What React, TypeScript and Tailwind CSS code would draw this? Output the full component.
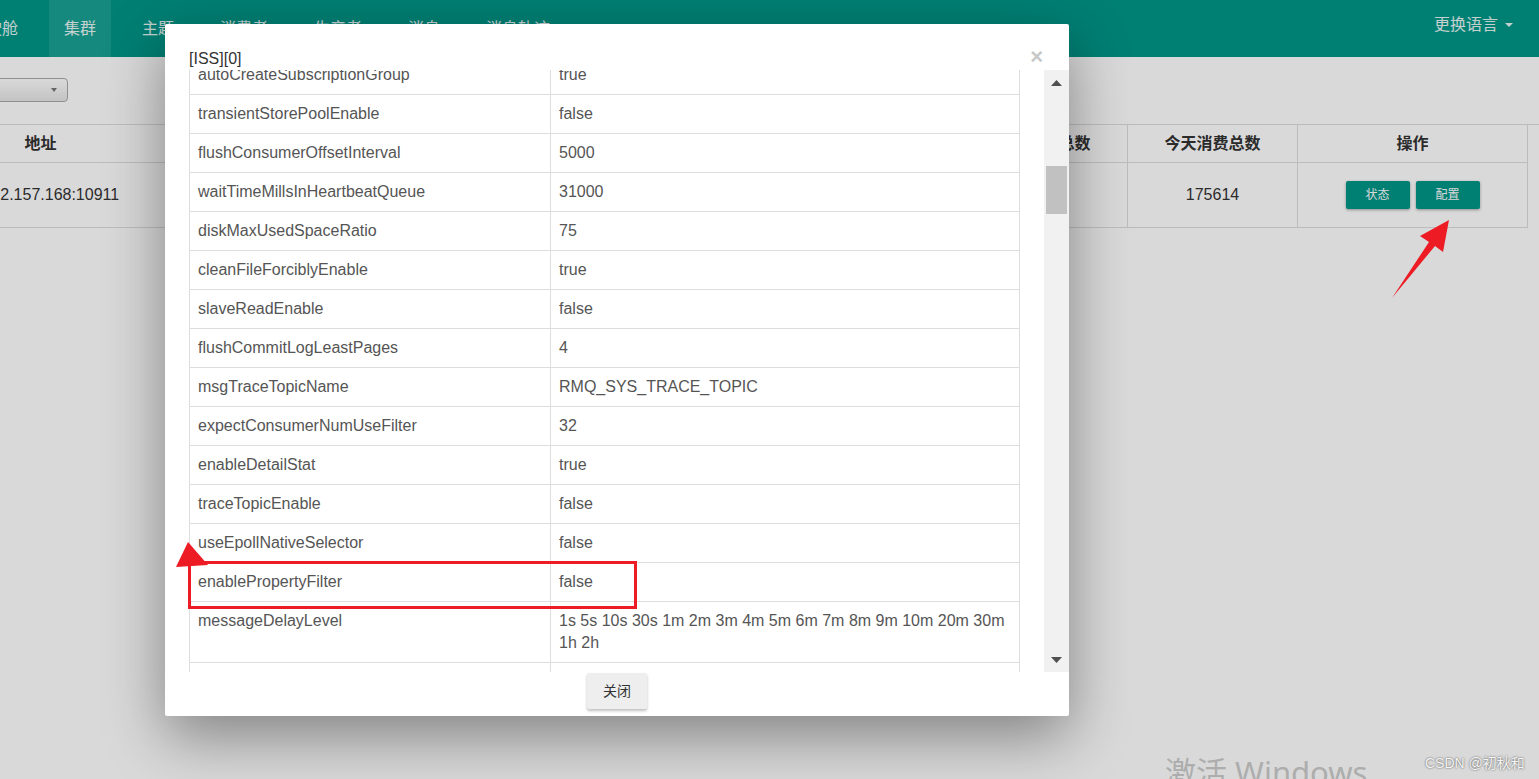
import React from "react";

const navItems = ["驾驶舱", "集群", "主题", "消费者", "生产者", "消息", "消息轨迹"];

const rows: [string, string][] = [
  ["autoCreateSubscriptionGroup", "true"],
  ["transientStorePoolEnable", "false"],
  ["flushConsumerOffsetInterval", "5000"],
  ["waitTimeMillsInHeartbeatQueue", "31000"],
  ["diskMaxUsedSpaceRatio", "75"],
  ["cleanFileForciblyEnable", "true"],
  ["slaveReadEnable", "false"],
  ["flushCommitLogLeastPages", "4"],
  ["msgTraceTopicName", "RMQ_SYS_TRACE_TOPIC"],
  ["expectConsumerNumUseFilter", "32"],
  ["enableDetailStat", "true"],
  ["traceTopicEnable", "false"],
  ["useEpollNativeSelector", "false"],
  ["enablePropertyFilter", "false"],
  ["messageDelayLevel", "1s 5s 10s 30s 1m 2m 3m 4m 5m 6m 7m 8m 9m 10m 20m 30m 1h 2h"],
  ["\u00a0", "\u00a0"],
];

const headers = ["地址", "", "", "", "今天生产总数", "今天消费总数", "操作"];

export default function App() {
  return (
    <div className="relative w-[1539px] h-[779px] overflow-hidden bg-white font-['Liberation_Sans','Noto_Sans_CJK_SC',sans-serif]">
      {/* Navbar */}
      <div className="h-[57px] bg-[#009688] flex items-center justify-between">
        <ul className="flex h-full gap-[16px] ml-[-45px]">
          {navItems.map((n, i) => (
            <li
              key={n}
              className={
                "h-full flex items-center px-[15px] text-[16px] text-white/90 " +
                (i === 1 ? "bg-white/10" : "")
              }
            >
              {n}
            </li>
          ))}
        </ul>
        <div className="mr-[26px] mt-[-7px] flex items-center gap-[7px] text-[16px] text-white/90">
          <span>更换语言</span>
          <span className="w-0 h-0 border-t-[4px] border-t-white/90 border-x-[4px] border-x-transparent" />
        </div>
      </div>

      {/* Page content */}
      <div className="pt-[21px]">
        <div className="ml-[-52px] w-[120px] h-[24px] rounded-[4px] border border-[#aaa] bg-gradient-to-b from-white to-[#e6e6e6] flex items-center justify-end pr-[10px]">
          <svg width="6" height="4" viewBox="0 0 6 4">
            <polygon points="0,0 6,0 3,4" fill="#777" />
          </svg>
        </div>
        <div className="mt-[22px] ml-[-90px] grid grid-cols-[260px_262px_262px_263px_170px_170px_231px] border-t border-[#ddd] text-[16px] text-[#333]">
          {headers.map((h, i) => (
            <div
              key={i}
              className={
                "h-[38px] flex items-center justify-center font-bold border-b border-l border-[#ddd] " +
                (i === 6 ? "border-r" : "")
              }
            >
              {h}
            </div>
          ))}
          <div className="h-[65px] flex items-center justify-start pl-[67px] border-b border-l border-[#ddd] whitespace-nowrap">10.2.157.168:10911</div>
          <div className="h-[65px] border-b border-l border-[#ddd]" />
          <div className="h-[65px] border-b border-l border-[#ddd]" />
          <div className="h-[65px] border-b border-l border-[#ddd]" />
          <div className="h-[65px] flex items-center justify-center border-b border-l border-[#ddd]">168230</div>
          <div className="h-[65px] flex items-center justify-center border-b border-l border-[#ddd]">175614</div>
          <div className="h-[65px] flex items-center justify-center gap-[6px] border-b border-l border-r border-[#ddd]">
            <button className="w-[64px] h-[28px] rounded-[2px] bg-[#009688] text-white text-[12px] shadow-[0_1px_3px_rgba(0,0,0,0.35)]">
              状态
            </button>
            <button className="w-[64px] h-[28px] rounded-[2px] bg-[#009688] text-white text-[12px] shadow-[0_1px_3px_rgba(0,0,0,0.35)]">
              配置
            </button>
          </div>
        </div>
      </div>

      {/* Backdrop */}
      <div className="absolute inset-0 bg-black/15" />

      {/* Modal */}
      <div className="absolute left-[165px] top-[24px] w-[904px] h-[692px] bg-white rounded-[2px] shadow-[0_20px_60px_rgba(0,0,0,0.4)] flex flex-col pt-[24px] pl-[24px]">
        <div className="h-[22px] leading-[22px] text-[16px] text-[#333]">[ISS][0]</div>
        <span className="absolute top-[22px] right-[26px] text-[22px] leading-none font-bold text-[#c8c8c8]">×</span>
        <div className="h-[602px] flex">
          <div className="flex-1 overflow-hidden">
            <div className="w-[831px] mt-[-14px] text-[16px] leading-[22px] text-[#555]">
              {rows.map(([k, v], i) => (
                <div key={i} className="flex border-l border-r border-b border-[#ddd]">
                  <div className="w-[360px] shrink-0 px-[8px] py-[8px]">{k}</div>
                  <div className="w-[469px] shrink-0 border-l border-[#ddd] px-[8px] py-[8px]">{v}</div>
                </div>
              ))}
            </div>
          </div>
          <div className="w-[25px] bg-[#f1f1f1] flex flex-col">
            <div className="h-[25px] flex items-center justify-center">
              <svg width="11" height="6" viewBox="0 0 11 6">
                <polygon points="5.5,0 11,6 0,6" fill="#505050" />
              </svg>
            </div>
            <div className="mt-[71px] mx-[2px] h-[48px] bg-[#c1c1c1]" />
            <div className="flex-1" />
            <div className="h-[25px] flex items-center justify-center">
              <svg width="11" height="6" viewBox="0 0 11 6">
                <polygon points="0,0 11,0 5.5,6" fill="#505050" />
              </svg>
            </div>
          </div>
        </div>
        <div className="flex justify-center pt-[1px] ml-[-24px]">
          <button className="w-[60px] h-[36px] rounded-[2px] bg-[#eeeeee] text-[14px] text-[#333] shadow-[0_2px_3px_rgba(0,0,0,0.25)]">
            关闭
          </button>
        </div>
      </div>

      {/* Annotations */}
      <svg className="absolute inset-0 pointer-events-none" width="1539" height="779" viewBox="0 0 1539 779">
        <rect x="189.5" y="562.5" width="446" height="45" fill="none" stroke="#ed1c24" strokeWidth="3" />
        <polygon points="188,542 176,567 208,565" fill="#ed1c24" />
        <polygon points="1449,220 1420,236 1429,242 1392,298 1435,246 1443,252" fill="#ed1c24" />
      </svg>

      {/* Watermark */}
      <div className="absolute left-[1165px] top-[757px] text-[31px] leading-[31px] text-[#adadad] font-['Noto_Sans','Noto_Sans_CJK_SC',sans-serif] whitespace-nowrap">
        激活 Windows
      </div>
      <div className="absolute left-[1425px] top-[753px] text-[14px] text-[#f4f4f4] whitespace-nowrap [text-shadow:0_0_2px_rgba(0,0,0,0.7)]">
        CSDN @初秋和
      </div>
    </div>
  );
}
